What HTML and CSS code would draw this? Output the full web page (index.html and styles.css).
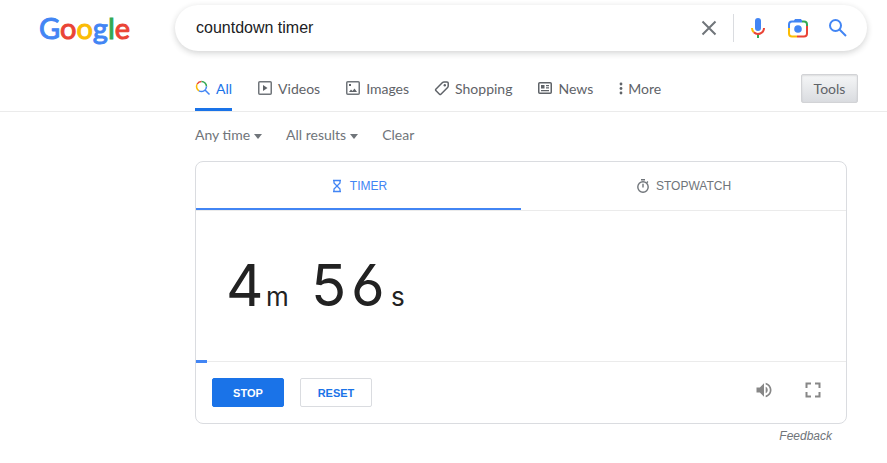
FILE: index.html
```
<!DOCTYPE html>
<html lang="en">
    <head>
        <meta charset="utf-8">
        <title>countdown timer - Google Search</title>
        <link rel="stylesheet" href="styles.css">
    </head>
    <body>
        <header class="header">
            <a class="logo" href="#" aria-label="Google"><span class="blue">G</span><span class="red">o</span><span class="yellow">o</span><span class="blue">g</span><span class="green">l</span><span class="red">e</span></a>
            <form class="search-box">
                <input class="search-input" type="text" aria-label="Search" value="countdown timer">
                <button class="icon-btn clear-btn" type="button" aria-label="Clear">
                    <svg width="24" height="24" viewBox="0 0 24 24"><path d="M5.5 5.5l13 13M18.500 5.500l-13 13" stroke="#70757a" stroke-width="2" fill="none"/></svg>
                </button>
                <button class="icon-btn" type="button" aria-label="Search by voice">
                    <svg width="24" height="24" viewBox="0 0 24 24">
                        <rect x="9" y="2" width="6" height="13" rx="3" fill="#4285f4"/>
                        <path d="M11 18h2v4h-2z" fill="#34a853"/>
                        <path d="M6 12a6 6 0 0 0 1.800 4.200" stroke="#fbbc04" stroke-width="2" fill="none"/>
                        <path d="M7.800 16.200a6 6 0 0 0 10.200-4.200" stroke="#ea4335" stroke-width="2" fill="none"/>
                    </svg>
                </button>
                <button class="icon-btn" type="button" aria-label="Search by image">
                    <svg width="24" height="24" viewBox="0 0 24 24" fill="none" stroke-width="2">
                        <path d="M3 12V8.500a3 3 0 0 1 3-3h10" stroke="#4285f4"/>
                        <path d="M7.500 5.500l1.500-2.500h6l1.500 2.500z" fill="#4285f4"/>
                        <path d="M16 5.500h2a3 3 0 0 1 3 3V10" stroke="#34a853"/>
                        <path d="M3 12v5.500a3 3 0 0 0 3 3h5" stroke="#fbbc04"/>
                        <path d="M11 20.500h7a3 3 0 0 0 3-3V10" stroke="#ea4335"/>
                        <circle cx="12" cy="13" r="3.800" fill="#4285f4"/>
                    </svg>
                </button>
                <button class="icon-btn" type="submit" aria-label="Google Search">
                    <svg width="24" height="24" viewBox="0 0 24 24" fill="none" stroke="#4285f4" stroke-width="2"><circle cx="9.500" cy="9.500" r="5.500"/><path d="M13.500 13.500l6.500 6.500"/></svg>
                </button>
            </form>
        </header>

        <nav class="nav">
            <a class="nav-item active" href="#">
                <svg width="16" height="16" viewBox="0 0 16 16" fill="none" stroke-width="1.500">
                    <path d="M2.200 4A5 5 0 0 1 6.500 1.500" stroke="#ea4335"/>
                    <path d="M6.500 1.500a5 5 0 0 1 5 5" stroke="#34a853"/>
                    <path d="M2.200 4a5 5 0 0 0 1.800 6.800" stroke="#fbbc04"/>
                    <path d="M4 10.800a5 5 0 0 0 7.500-4.300M10 10l4.500 4.500" stroke="#4285f4"/>
                </svg>All</a>
            <a class="nav-item" href="#">
                <svg width="16" height="16" viewBox="0 0 16 16"><rect x="1.750" y="1.750" width="12.500" height="12.500" rx="1" fill="none" stroke="#70757a" stroke-width="1.500"/><path d="M6 5v6l4.500-3z" fill="#5f6368"/></svg>Videos</a>
            <a class="nav-item" href="#">
                <svg width="16" height="16" viewBox="0 0 16 16"><rect x="1.750" y="1.750" width="12.500" height="12.500" rx="1" fill="none" stroke="#70757a" stroke-width="1.500"/><path d="M4 12l2-2.500 1.500 1.500L9.500 8.500 12 12zM4 4h2v2H4z" fill="#5f6368"/></svg>Images</a>
            <a class="nav-item" href="#">
                <svg width="16" height="16" viewBox="0 0 16 16"><path d="M1.800 9.200L8.500 2.500q.6-.6 1.500-.6h3q1.200 0 1.200 1.200v3q0 .8-.6 1.400l-6.700 6.700q-.7.6-1.400 0L1.800 10.500q-.6-.6 0-1.300z" fill="none" stroke="#5f6368" stroke-width="1.500"/><circle cx="10.800" cy="5.200" r="1.200" fill="#5f6368"/></svg>Shopping</a>
            <a class="nav-item" href="#">
                <svg width="16" height="16" viewBox="0 0 16 16"><rect x="1.750" y="2.750" width="12.500" height="10.500" rx="1" fill="none" stroke="#5f6368" stroke-width="1.500"/><path d="M4 5h3.500v3.500H4zM9 5h3v1.300H9zM9 7.300h3v1.300H9zM4 10h8v1.300H4z" fill="#5f6368"/></svg>News</a>
            <a class="nav-item more" href="#">
                <svg width="6" height="16" viewBox="0 0 6 16" fill="#5f6368"><circle cx="3" cy="4" r="1.400"/><circle cx="3" cy="8.500" r="1.400"/><circle cx="3" cy="13" r="1.400"/></svg>More</a>
            <button class="tools" type="button">Tools</button>
        </nav>

        <main class="main">
            <div class="filters">
                <button class="filter dropdown" type="button">Any time</button>
                <button class="filter dropdown" type="button">All results</button>
                <a class="filter" href="#">Clear</a>
            </div>

            <section class="card">
                <div class="card-tabs">
                    <button class="card-tab selected" type="button">
                        <svg width="14" height="14" viewBox="0 0 14 14" fill="none" stroke="#4285f4" stroke-width="1.300"><path d="M3 1.500h8M3 12.500h8M4 1.500v2.500l6 6v2.500M10 1.500v2.500l-6 6v2.500"/></svg>TIMER</button>
                    <button class="card-tab" type="button">
                        <svg width="14" height="14" viewBox="0 0 14 14" fill="none" stroke="#70757a" stroke-width="1.400"><circle cx="7" cy="8" r="5.200"/><path d="M5 .8h4M7 4.800v3.700M10.700 3.800l1.200-1.200"/></svg>STOPWATCH</button>
                </div>
                <div class="time">
                    <span class="digit">4</span><span class="unit minutes">m</span>
                    <span class="digit">5</span><span class="digit">6</span><span class="unit">s</span>
                </div>
                <div class="progress"><div class="progress-bar" style="width: 1.700%"></div></div>
                <div class="controls">
                    <button class="btn primary" type="button">STOP</button>
                    <button class="btn" type="button">RESET</button>
                    <button class="icon-btn sound" type="button" aria-label="Sound">
                        <svg width="20" height="20" viewBox="0 0 24 24" fill="#878787"><path d="M3 9v6h4l5 5V4L7 9H3zm13.500 3c0-1.770-1.020-3.290-2.500-4.030v8.050c1.480-.73 2.500-2.250 2.500-4.020zM14 3.230v2.060c2.890.86 5 3.540 5 6.710s-2.110 5.850-5 6.710v2.060c4.010-.91 7-4.490 7-8.770s-2.990-7.860-7-8.770z"/></svg>
                    </button>
                    <button class="icon-btn" type="button" aria-label="Full screen">
                        <svg width="20" height="20" viewBox="0 0 20 20" fill="none" stroke="#878787" stroke-width="2"><path d="M3.500 8V3.500H8M12 3.500h4.500V8M16.500 12v4.500H12M8 16.500H3.500V12"/></svg>
                    </button>
                </div>
            </section>
            <a class="feedback" href="#">Feedback</a>
        </main>
    </body>
</html>
```

FILE: styles.css
```
*{
    box-sizing: border-box;
}
body{
    margin: 0;
    background: #fff;
    color: #202124;
    font-family: "Liberation Sans", Arial, sans-serif;
}
a{
    color: inherit;
    text-decoration: none;
}
button{
    margin: 0;
    padding: 0;
    border: 0;
    background: none;
    color: inherit;
    font: inherit;
    cursor: pointer;
}
svg{
    display: block;
    flex: none;
}
.header{
    display: flex;
    align-items: center;
    padding: 5px 20px 0 39px;
}
.logo{
    flex: none;
    width: 136px;
    font: 29px/46px Lato, sans-serif;
    -webkit-text-stroke: 1px;
}
.blue{
    color: #4285f4;
}
.red{
    color: #ea4335;
}
.yellow{
    color: #fbbc05;
}
.green{
    color: #34a853;
}
.search-box{
    display: flex;
    flex: 1;
    align-items: center;
    height: 46px;
    padding: 0 17px 0 21px;
    border-radius: 24px;
    box-shadow: 0 2px 6px rgba(32, 33, 36, 0.2);
}
.search-input{
    flex: 1;
    min-width: 0;
    padding: 0;
    border: 0;
    outline: none;
    color: #202124;
    font: 16px "Liberation Sans", Arial, sans-serif;
}
.icon-btn{
    display: flex;
    align-items: center;
    justify-content: center;
    width: 24px;
    margin-left: 16px;
}
.clear-btn{
    width: 37px;
    height: 28px;
    justify-content: flex-start;
    border-right: 1px solid #dadce0;
    margin-right: -4px;
}
.nav{
    display: flex;
    align-items: center;
    gap: 25px;
    height: 61px;
    padding: 0 29px 0 195px;
    border-bottom: 1px solid #ebebeb;
    color: #5f6368;
    font: 14px Lato, sans-serif;
}
.nav-item{
    display: flex;
    align-items: center;
    gap: 5px;
    height: 46px;
    margin-top: 14px;
}
.nav-item.more{
    gap: 4px;
}
.nav-item.active{
    border-bottom: 3px solid #1a73e8;
    border-top: 3px solid transparent;
    color: #1a73e8;
}
.tools{
    width: 57px;
    height: 29px;
    margin: 14px 0 0 auto;
    border: 1px solid #d2d3d6;
    border-radius: 2px;
    background: linear-gradient(#f5f6f7, #dadce0);
    box-shadow: inset 0 1px 2px rgba(0, 0, 0, 0.1);
}
.main{
    padding: 0 40px 0 195px;
}
.filters{
    display: flex;
    align-items: center;
    gap: 24px;
    height: 49px;
    padding-bottom: 4px;
    color: #70757a;
    font: 14px Lato, sans-serif;
}
.dropdown::after{
    content: "";
    display: inline-block;
    margin-left: 4px;
    vertical-align: 1px;
    border: 4px solid transparent;
    border-top: 5px solid #70757a;
    border-bottom: 0;
}
.card{
    border: 1px solid #dadce0;
    border-radius: 8px;
}
.card-tabs{
    display: flex;
    border-bottom: 1px solid #ebebeb;
}
.card-tab{
    display: flex;
    flex: 1;
    align-items: center;
    justify-content: center;
    gap: 6px;
    height: 48px;
    color: #70757a;
    font-size: 12px;
}
.card-tab.selected{
    color: #4285f4;
    box-shadow: inset 0 -2px #4285f4;
}
.time{
    display: flex;
    align-items: baseline;
    height: 149px;
    padding: 39px 30px 0;
    color: #222;
    font-family: Inter, sans-serif;
    font-feature-settings: "cv03";
}
.digit{
    width: 40px;
    font-size: 58px;
}
.unit{
    font-size: 26px;
}
.minutes{
    width: 45px;
}
.progress{
    border-bottom: 1px solid #ebebeb;
}
.progress-bar{
    height: 3px;
    margin-bottom: -2px;
    background: #4285f4;
}
.controls{
    display: flex;
    align-items: center;
    gap: 16px;
    height: 61px;
    padding: 0 21px 0 16px;
}
.btn{
    width: 72px;
    height: 29px;
    border: 1px solid #dadce0;
    border-radius: 2px;
    color: #1a73e8;
    font-size: 11px;
    font-weight: bold;
}
.btn.primary{
    border-color: #1a73e8;
    background: #1a73e8;
    color: #fff;
}
.controls .icon-btn{
    margin-left: 9px;
    padding-bottom: 5px;
}
.controls .sound{
    margin-left: auto;
}
.feedback{
    display: block;
    padding: 5px 15px 0 0;
    color: #70757a;
    font-size: 12px;
    font-style: italic;
    text-align: right;
}
```
